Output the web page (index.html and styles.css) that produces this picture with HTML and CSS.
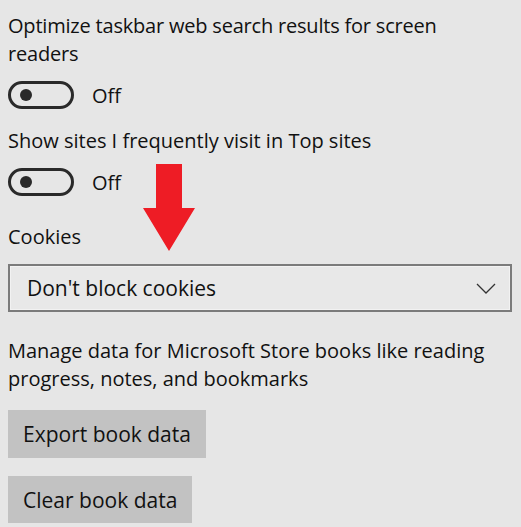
FILE: index.html
```html
<!DOCTYPE html>
<html lang="en">
<head>
  <meta charset="UTF-8" />
  <meta name="viewport" content="width=device-width, initial-scale=1" />
  <title>Privacy and services</title>
  <link rel="stylesheet" href="styles.css">
</head>
<body>

  <div class="settings">
    <p class="setting-label first">Optimize taskbar web search results for screen readers</p>
    <div class="toggle-row">
      <span class="toggle"><span class="knob"></span></span>
      <span class="toggle-state">Off</span>
    </div>

    <p class="setting-label second">Show sites I frequently visit in Top sites</p>
    <div class="toggle-row">
      <span class="toggle"><span class="knob"></span></span>
      <span class="toggle-state">Off</span>
    </div>

    <p class="setting-label cookies">Cookies</p>
    <div class="dropdown">
      <span class="dropdown-value">Don't block cookies</span>
      <svg class="chevron" width="20" height="11" viewBox="0 0 20 11">
        <polyline points="1,1 10,10 19,1" fill="none" stroke="#333" stroke-width="1.3" />
      </svg>
    </div>

    <p class="setting-label books">Manage data for Microsoft Store books like reading progress, notes, and bookmarks</p>
    <button class="gray-button export">Export book data</button>
    <button class="gray-button clear">Clear book data</button>
  </div>

  <!-- red pointer arrow -->
  <svg class="pointer" width="52" height="88" viewBox="0 0 52 88">
    <polygon points="13,0 39,0 39,44 52,44 26,87 0,44 13,44" fill="#ee1c25" />
  </svg>

</body>
</html>
```

FILE: styles.css
```css
body {
  margin: 0;
  background: #e6e6e6;
  font-family: "Open Sans", "Noto Sans", sans-serif;
  color: #111;
  width: 521px;
  height: 527px;
  overflow: hidden;
  position: relative;
}
.settings {
  display: flex;
  flex-direction: column;
  align-items: flex-start;
  padding: 12px 0 0 8px;
}
.setting-label {
  margin: 0;
  font-size: 20px;
  line-height: 28px;
  width: 490px;
}
.first {
  letter-spacing: -0.2px;
}
.second {
  margin-top: 18px;
}
.cookies {
  margin-top: 27px;
}
.books {
  margin-top: 25px;
}
.toggle-row {
  display: flex;
  align-items: center;
  gap: 18px;
  margin-top: 13px;
}
.toggle {
  width: 66px;
  height: 28px;
  box-sizing: border-box;
  border: 3px solid #2a2a2a;
  border-radius: 14px;
  display: flex;
  align-items: center;
  padding-left: 9px;
}
.knob {
  width: 12px;
  height: 12px;
  border-radius: 50%;
  background: #2a2a2a;
}
.toggle-state {
  font-size: 20px;
}
.dropdown {
  margin-top: 13px;
  width: 504px;
  height: 48px;
  box-sizing: border-box;
  border: 2px solid #7b7b7b;
  box-shadow: inset 0 0 0 1px #f2f2f2;
  background: #e8e8e8;
  display: flex;
  align-items: center;
  justify-content: space-between;
  padding: 0 14px 0 17px;
}
.dropdown-value {
  font-size: 21px;
}
.gray-button {
  font-family: inherit;
  font-size: 21px;
  color: #111;
  background: #c2c2c2;
  border: none;
  height: 48px;
  padding: 0 15px;
  margin-top: 17px;
}
.clear {
  height: 47px;
  margin-top: 18px;
}
.pointer {
  position: absolute;
  left: 143px;
  top: 164px;
}
```
